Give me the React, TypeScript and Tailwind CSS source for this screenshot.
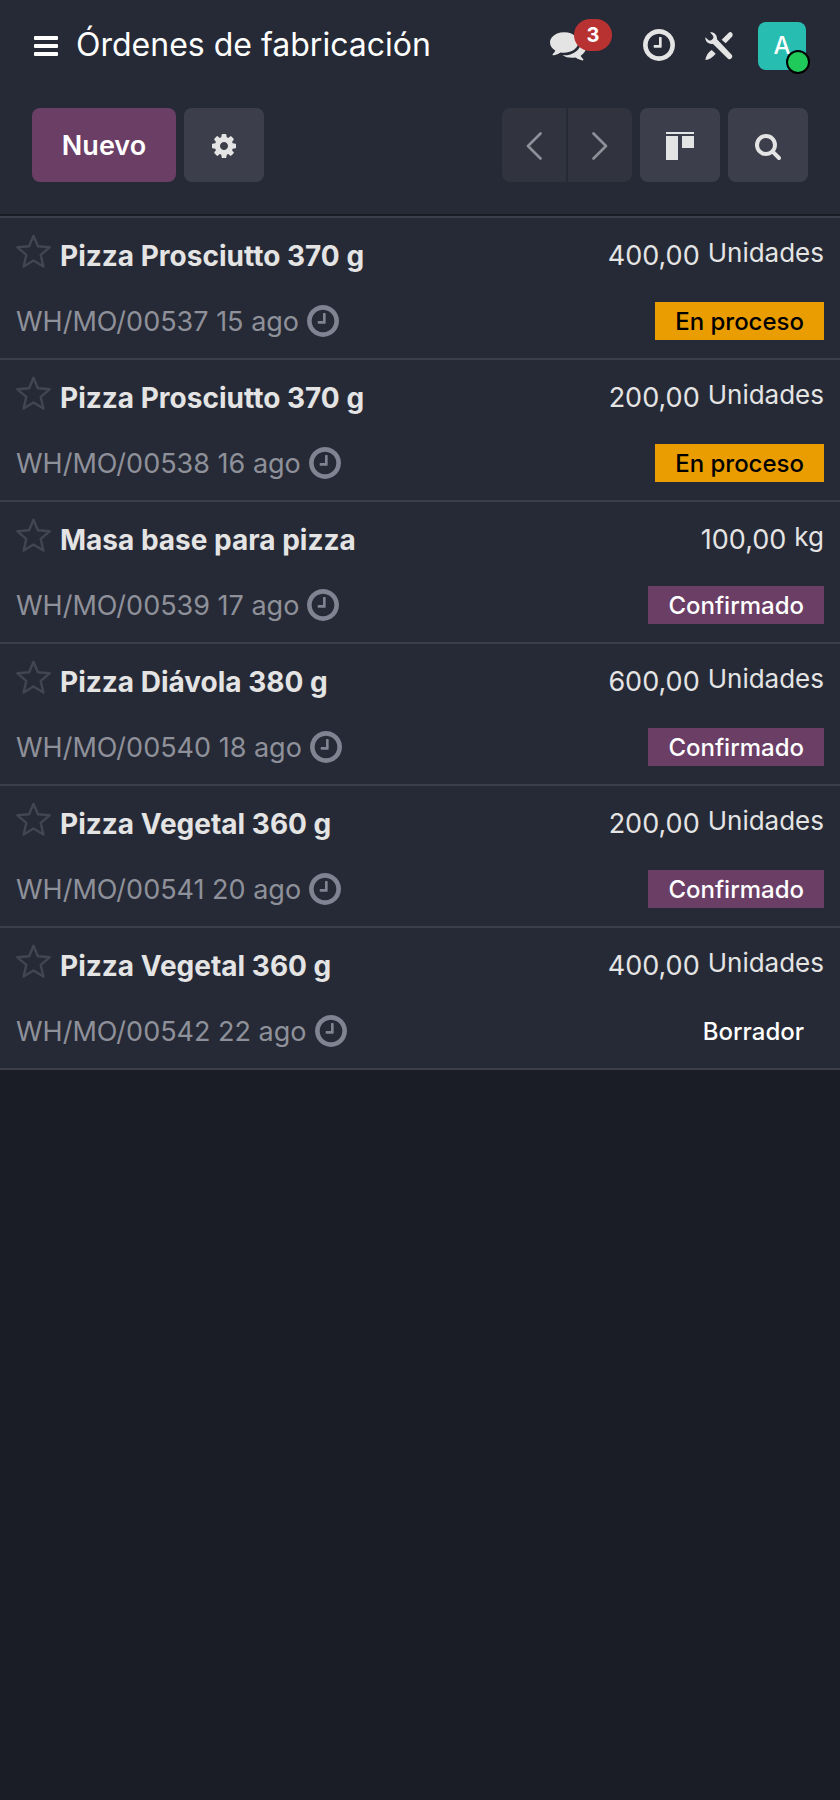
import React from 'react';

type OrderState = 'progress' | 'confirmed' | 'draft';

interface Order {
  id: string;
  product: string;
  quantity: string;
  unit: string;
  date: string;
  state: OrderState;
}

const orders: Order[] = [
  { id: 'WH/MO/00537', product: 'Pizza Prosciutto 370 g', quantity: '400,00', unit: 'Unidades', date: '15 ago', state: 'progress' },
  { id: 'WH/MO/00538', product: 'Pizza Prosciutto 370 g', quantity: '200,00', unit: 'Unidades', date: '16 ago', state: 'progress' },
  { id: 'WH/MO/00539', product: 'Masa base para pizza', quantity: '100,00', unit: 'kg', date: '17 ago', state: 'confirmed' },
  { id: 'WH/MO/00540', product: 'Pizza Diávola 380 g', quantity: '600,00', unit: 'Unidades', date: '18 ago', state: 'confirmed' },
  { id: 'WH/MO/00541', product: 'Pizza Vegetal 360 g', quantity: '200,00', unit: 'Unidades', date: '20 ago', state: 'confirmed' },
  { id: 'WH/MO/00542', product: 'Pizza Vegetal 360 g', quantity: '400,00', unit: 'Unidades', date: '22 ago', state: 'draft' }
];

const stateLabels: Record<OrderState, string> = {
  progress: 'En proceso',
  confirmed: 'Confirmado',
  draft: 'Borrador'
};

const stateClasses: Record<OrderState, string> = {
  progress: 'bg-[#e99d00] text-black',
  confirmed: 'bg-[#6b3e66] text-white',
  draft: 'text-white'
};

interface IconProps {
  className?: string;
}

const BarsIcon: React.FC<IconProps> = ({ className = '' }) => (
  <svg viewBox="0 0 24 20" fill="currentColor" className={className} aria-hidden="true">
    <rect width="24" height="4" rx="1" />
    <rect y="8" width="24" height="4" rx="1" />
    <rect y="16" width="24" height="4" rx="1" />
  </svg>
);

const CommentsIcon: React.FC<IconProps> = ({ className = '' }) => (
  <svg viewBox="0 0 1792 1792" fill="currentColor" className={className} aria-hidden="true">
    <path d="M1408 768q0 139-94 257t-256.5 186.5-353.5 68.5q-86 0-176-16-124 88-278 128-36 9-86 16h-3q-11 0-20.5-8t-11.5-21q-1-3-1-6.5t.5-6.5 2-6l2.5-5 3.5-5.5 4-5 4.5-5 4-4.5q5-6 23-25t26-29.5 22.5-29 25-38.5 20.5-44q-124-72-195-177t-71-224q0-139 94-257t256.5-186.5 353.5-68.5 353.5 68.5 256.5 186.5 94 257zm384 256q0 120-71 224.5t-195 176.5q10 24 20.5 44t25 38.5 22.5 29 26 29.5 23 25q1 1 4 4.5t4.5 5 4 5 3.5 5.5l2.5 5 2 6 .5 6.5-1 6.5q-3 14-13 22t-22 7q-50-7-86-16-154-40-278-128-90 16-176 16-271 0-472-132 58 4 88 4 161 0 309-45t264-129q125-92 192-212t67-254q0-77-23-152 129 71 204 178t75 230z" />
  </svg>
);

const ClockIcon: React.FC<IconProps> = ({ className = '' }) => (
  <svg viewBox="128 128 1536 1536" fill="currentColor" className={className} aria-hidden="true">
    <path d="M1024 544v448q0 14-9 23t-23 9h-320q-14 0-23-9t-9-23v-64q0-14 9-23t23-9h224v-352q0-14 9-23t23-9h64q14 0 23 9t9 23zm416 352q0-148-73-273t-198-198-273-73-273 73-198 198-73 273 73 273 198 198 273 73 273-73 198-198 73-273zm224 0q0 209-103 385.5t-279.5 279.5-385.5 103-385.5-103-279.5-279.5-103-385.5 103-385.5 279.5-279.5 385.5-103 385.5 103 279.5 279.5 103 385.5z" />
  </svg>
);

const ToolsIcon: React.FC<IconProps> = ({ className = '' }) => (
  <svg viewBox="0 0 84 84" fill="currentColor" className={className} aria-hidden="true">
    <path d="M15 1C26-1 37 8 36 22L80 68Q84 73 80 78Q75 84 69 80L24 36C12 38 0 30 1 16L11 25Q18 27 22 22Q27 18 24 11Z" />
    <path d="M71 2Q77-2 81 3Q85 8 81 14L62 34L50 23Z" />
    <path d="M20 54L32 65C23 77 12 82 1 84C3 72 9 61 20 54Z" />
  </svg>
);

const CogIcon: React.FC<IconProps> = ({ className = '' }) => (
  <svg viewBox="128 128 1536 1536" fill="currentColor" className={className} aria-hidden="true">
    <path d="M1152 896q0-106-75-181t-181-75-181 75-75 181 75 181 181 75 181-75 75-181zm512-109v222q0 12-8 23t-20 13l-185 28q-19 54-39 91 35 50 107 138 10 12 10 25t-9 23q-27 37-99 108t-94 71q-12 0-26-9l-138-108q-44 23-91 38-16 136-29 186-7 28-36 28h-222q-14 0-24.5-8.5t-11.5-21.5l-28-184q-49-16-90-37l-141 107q-10 9-25 9-14 0-25-11-126-114-165-168-7-10-7-23 0-12 8-23 15-21 51-66.5t54-70.5q-27-50-41-99l-183-27q-13-2-21-12.5t-8-23.5v-222q0-12 8-23t19-13l186-28q14-46 39-92-40-57-107-138-10-12-10-24 0-10 9-23 26-36 98.5-107.5t94.5-71.5q13 0 26 10l138 107q44-23 91-38 16-136 29-186 7-28 36-28h222q14 0 24.5 8.5t11.5 21.5l28 184q49 16 90 37l142-107q9-9 24-9 13 0 25 10 129 119 165 170 7 8 7 22 0 12-8 23-15 21-51 66.5t-54 70.5q26 50 41 98l183 28q13 2 21 12.5t8 23.5z" />
  </svg>
);

const SearchIcon: React.FC<IconProps> = ({ className = '' }) => (
  <svg viewBox="64 128 1664 1664" fill="currentColor" className={className} aria-hidden="true">
    <path d="M1216 832q0-185-131.5-316.5t-316.5-131.5-316.5 131.5-131.5 316.5 131.5 316.5 316.5 131.5 316.5-131.5 131.5-316.5zm512 832q0 52-38 90t-90 38q-54 0-90-38l-343-342q-179 124-399 124-143 0-273.5-55.5t-225-150-150-225-55.5-273.5 55.5-273.5 150-225 225-150 273.5-55.5 273.5 55.5 225 150 150 225 55.5 273.5q0 220-124 399l343 343q37 37 37 90z" />
  </svg>
);

const KanbanIcon: React.FC<IconProps> = ({ className = '' }) => (
  <svg viewBox="0 0 28 28" fill="currentColor" className={className} aria-hidden="true">
    <rect width="28" height="2" />
    <rect y="4" width="12" height="24" />
    <rect x="16" y="4" width="12" height="12" />
  </svg>
);

const ChevronIcon: React.FC<IconProps & { direction: 'left' | 'right' }> = ({ direction, className = '' }) => (
  <svg
    viewBox="0 0 16 28"
    fill="none"
    stroke="currentColor"
    strokeWidth="2.6"
    strokeLinecap="round"
    strokeLinejoin="round"
    className={className}
    aria-hidden="true"
  >
    <path d={direction === 'left' ? 'M14.5 1.5L2 14l12.5 12.5' : 'M1.5 1.5L14 14 1.5 26.5'} />
  </svg>
);

const StarIcon: React.FC<IconProps> = ({ className = '' }) => (
  <svg viewBox="0 0 36 36" fill="none" stroke="currentColor" strokeWidth="2.4" strokeLinejoin="round" className={className} aria-hidden="true">
    <path d="M17.5 1.8L21.9 12.3L33.6 13.3L24.7 20.9L27.4 32.6L17.5 26.4L7.6 32.6L10.3 20.9L1.4 13.3L13.1 12.3Z" />
  </svg>
);

const Navbar: React.FC = () => (
  <header className="flex h-[92px] items-center justify-between px-8">
    <div className="flex items-center">
      <button type="button" aria-label="Menú" className="px-0.5 text-white">
        <BarsIcon className="h-5 w-6" />
      </button>
      <h1 className="ml-4 pb-0.5 text-[32px] leading-[48px] text-white">Órdenes de fabricación</h1>
    </div>
    <div className="flex items-center text-[#e4e4e4]">
      <button type="button" aria-label="Conversaciones" className="relative mr-[57px] pb-0.5">
        <CommentsIcon className="size-9" />
        <span className="absolute -top-2 left-6 flex h-8 w-[38px] items-center justify-center rounded-full bg-[#b83232] text-xl font-bold text-white">
          3
        </span>
      </button>
      <button type="button" aria-label="Actividades" className="mr-[30px] pb-0.5">
        <ClockIcon className="size-8" />
      </button>
      <button type="button" aria-label="Herramientas" className="mr-[25px]">
        <ToolsIcon className="size-7" />
      </button>
      <button type="button" aria-label="Cuenta" className="relative mr-0.5 flex size-12 items-center justify-center rounded-lg bg-[#28bdb1] text-2xl font-medium text-white">
        A
        <span className="absolute -right-1 -bottom-1 size-6 rounded-full border-2 border-black bg-[#1fc95a]" />
      </button>
    </div>
  </header>
);

const ControlPanel: React.FC = () => (
  <div className="flex justify-between border-b-2 border-[#1b1d26] px-8 pt-4 pb-8 text-[#e4e4e4]">
    <div className="flex gap-2">
      <button type="button" className="h-[74px] w-36 rounded-lg bg-[#6b3e66] pt-0.5 text-[27px] font-semibold text-white">
        Nuevo
      </button>
      <button type="button" aria-label="Acciones" className="flex h-[74px] w-20 items-center justify-center rounded-lg bg-[#3c3e4b] pt-0.5">
        <CogIcon className="size-6" />
      </button>
    </div>
    <div className="flex gap-2">
      <div className="flex gap-0.5 text-[#8f919a]">
        <button type="button" aria-label="Anterior" disabled className="flex h-[74px] w-16 items-center justify-center rounded-l-lg bg-[#31343f] pt-0.5">
          <ChevronIcon direction="left" className="h-7 w-4" />
        </button>
        <button type="button" aria-label="Siguiente" disabled className="flex h-[74px] w-16 items-center justify-center rounded-r-lg bg-[#31343f] pt-0.5">
          <ChevronIcon direction="right" className="h-7 w-4" />
        </button>
      </div>
      <button type="button" aria-label="Kanban" className="flex h-[74px] w-20 items-center justify-center rounded-lg bg-[#3c3e4b] pt-0.5">
        <KanbanIcon className="size-7" />
      </button>
      <button type="button" aria-label="Buscar" className="flex h-[74px] w-20 items-center justify-center rounded-lg bg-[#3c3e4b] pt-1">
        <SearchIcon className="size-[26px]" />
      </button>
    </div>
  </div>
);

const OrderRow: React.FC<{ order: Order }> = ({ order }) => (
  <li className="flex flex-col gap-6 border-b-2 border-[#3c3e4b] px-4 py-4">
    <div className="flex items-start justify-between leading-11">
      <div className="flex items-start gap-2">
        <button type="button" aria-label="Prioridad" className="text-[#424552]">
          <StarIcon className="size-9" />
        </button>
        <h2 className="text-[28px] font-bold">{order.product}</h2>
      </div>
      <div className="flex gap-2">
        <span className="text-[27px]">{order.quantity}</span>
        <span className="text-[26px] leading-[38px]">{order.unit}</span>
      </div>
    </div>
    <div className="flex items-start justify-between">
      <div className="flex items-center gap-2 text-[27px] leading-10 text-[#8f919a]">
        <span>
          {order.id} {order.date}
        </span>
        <button type="button" aria-label="Programar actividad" className="pb-0.5 text-[#7f8392]">
          <ClockIcon className="size-8" />
        </button>
      </div>
      <span className={`h-[38px] px-5 text-2xl leading-10 font-medium ${stateClasses[order.state]}`}>
        {stateLabels[order.state]}
      </span>
    </div>
  </li>
);

export default function App() {
  return (
    <div className="min-h-screen bg-[#1b1d26] font-['Inter',sans-serif] text-[#e4e4e4]">
      <div className="bg-[#262a36]">
        <Navbar />
        <ControlPanel />
        <ul className="border-t-2 border-[#3c3e4b]">
          {orders.map((order) => (
            <OrderRow key={order.id} order={order} />
          ))}
        </ul>
      </div>
    </div>
  );
}
